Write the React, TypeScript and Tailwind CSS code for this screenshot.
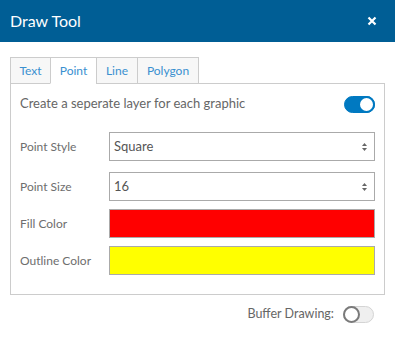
import React, { useState } from 'react';

const tabs = [
  { name: 'Text', w: 'w-[41px]' },
  { name: 'Point', w: 'w-[47px]' },
  { name: 'Line', w: 'w-[42px]' },
  { name: 'Polygon', w: 'w-[62px]' },
];

const Toggle: React.FC<{ on: boolean; onClick: () => void }> = ({ on, onClick }) => (
  <button
    onClick={onClick}
    className={`relative w-[31px] h-[17px] rounded-full border ${
      on ? 'bg-[#0079c1] border-[#0079c1]' : 'bg-[#efefef] border-[#d4d4d4]'
    }`}
  >
    <span
      className={`absolute top-[-1px] w-[17px] h-[17px] rounded-full bg-white border-2 ${
        on ? 'right-[-1px] border-[#0079c1]' : 'left-[-1px] border-[#7a7a7a]'
      }`}
    />
  </button>
);

const SelectArrows = () => (
  <svg width="7" height="10" viewBox="0 0 7 10" className="text-[#666]">
    <path d="M3.5 1 L6 4 H1 Z" fill="currentColor" />
    <path d="M3.5 9 L6 6 H1 Z" fill="currentColor" />
  </svg>
);

const App: React.FC = () => {
  const [active, setActive] = useState('Point');
  const [separate, setSeparate] = useState(true);
  const [buffer, setBuffer] = useState(false);

  return (
    <div className="w-[395px] h-[349px] bg-white font-['Lato',sans-serif]">
      {/* Header */}
      <div className="h-[42px] bg-[#005e95] flex items-center justify-between pl-[10px] pr-[18px]">
        <span className="text-white text-[16px]">Draw Tool</span>
        <svg width="10" height="10" viewBox="0 0 10 10">
          <path d="M1.5 1.5 L8.5 8.5 M8.5 1.5 L1.5 8.5" stroke="white" strokeWidth="2.2" />
        </svg>
      </div>

      <div className="px-[10px] pt-[15px]">
        {/* Tabs */}
        <div className="flex relative z-10 -mb-px">
          {tabs.map(t => (
            <button
              key={t.name}
              onClick={() => setActive(t.name)}
              className={`${t.w} h-[27px] text-[12px] text-[#3a90d0] border border-[#cccccc] -ml-px first:ml-0 ${
                active === t.name ? 'bg-white border-b-white' : 'bg-[#f7f7f7]'
              }`}
            >
              {t.name}
            </button>
          ))}
        </div>

        {/* Panel */}
        <div className="border border-[#cccccc] pl-[9px] pr-[9px] pt-[10px] pb-[19px]">
          <div className="flex items-center justify-between h-[20px]">
            <span className="text-[13px] text-[#666]">Create a seperate layer for each graphic</span>
            <Toggle on={separate} onClick={() => setSeparate(!separate)} />
          </div>

          <div className="mt-[18px] flex flex-col">
            <div className="flex items-center">
              <span className="w-[89px] text-[12px] text-[#6e6e6e]">Point Style</span>
              <div className="flex-1 h-[29px] border border-[#aaaaaa] flex items-center justify-between pl-[4px] pr-[6px]">
                <span className="text-[13px] text-[#555]">Square</span>
                <SelectArrows />
              </div>
            </div>
            <div className="flex items-center mt-[11px]">
              <span className="w-[89px] text-[12px] text-[#6e6e6e]">Point Size</span>
              <div className="flex-1 h-[29px] border border-[#aaaaaa] flex items-center justify-between pl-[4px] pr-[6px]">
                <span className="text-[13px] text-[#555]">16</span>
                <SelectArrows />
              </div>
            </div>
            <div className="flex items-center mt-[8px]">
              <span className="w-[89px] text-[12px] text-[#6e6e6e]">Fill Color</span>
              <div className="flex-1 h-[29px] border border-[#aaaaaa] bg-[#ff0000]" />
            </div>
            <div className="flex items-center mt-[8px]">
              <span className="w-[89px] text-[12px] text-[#6e6e6e]">Outline Color</span>
              <div className="flex-1 h-[29px] border border-[#aaaaaa] bg-[#ffff00]" />
            </div>
          </div>
        </div>

        {/* Buffer */}
        <div className="flex items-center justify-end gap-[9px] pr-[11px] mt-[10px]">
          <span className="text-[12.5px] text-[#666]">Buffer Drawing:</span>
          <Toggle on={buffer} onClick={() => setBuffer(!buffer)} />
        </div>
      </div>
    </div>
  );
};

export default App;
